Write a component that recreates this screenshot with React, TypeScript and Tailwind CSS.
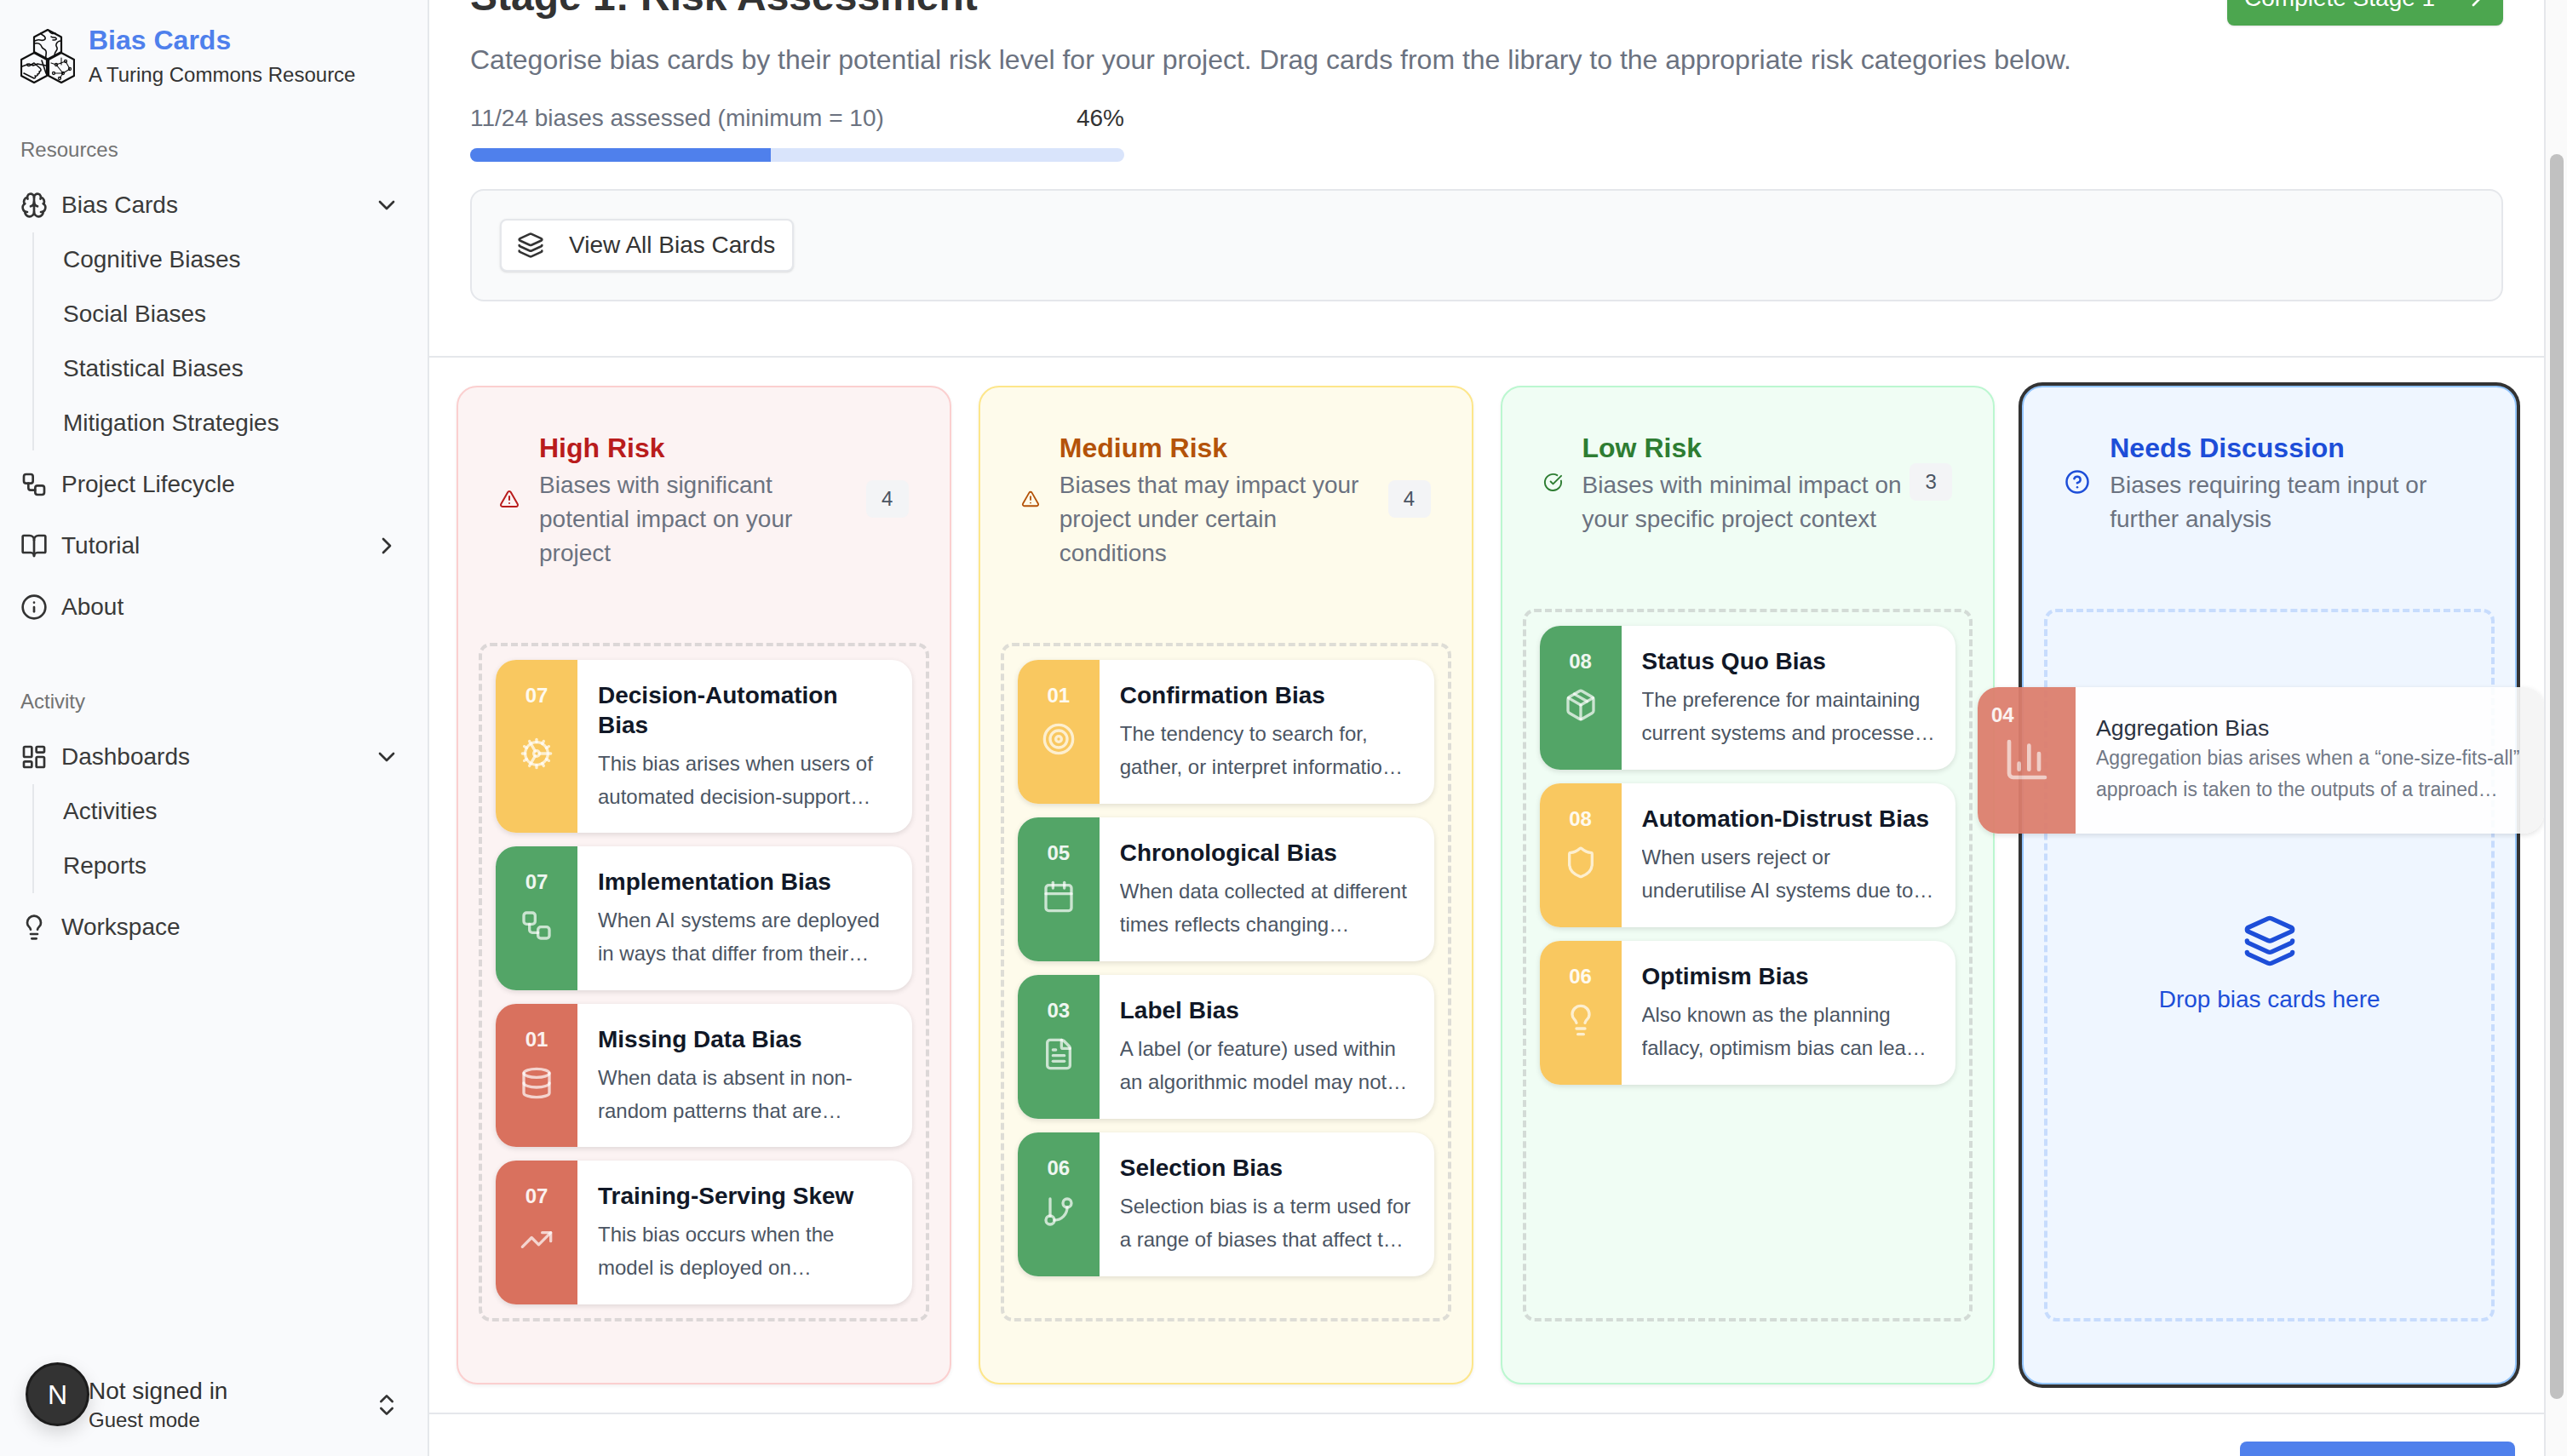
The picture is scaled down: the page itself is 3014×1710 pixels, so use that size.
import {
  BookOpen, Brain, Calendar, ChartColumn, ChevronDown, ChevronRight, ChevronsUpDown, CircleCheckBig,
  CircleHelp, Cog, Database, FileText, GitBranch, Info, Layers, LayoutDashboard, Lightbulb, Package,
  Shield, Target, TrendingUp, TriangleAlert, Workflow,
} from 'lucide-react'
import type { LucideIcon } from 'lucide-react'

interface Bias {
  num: string
  title: string
  text: string
  strip: string
  icon: LucideIcon
}

const yellow = 'bg-[#f9c860]'
const green = 'bg-[#53a567]'
const red = 'bg-[#d9715e]'

const highRisk: Bias[] = [
  { num: '07', title: 'Decision-Automation Bias', text: 'This bias arises when users of automated decision-support systems favour suggestions made by those systems over other evidence.', strip: yellow, icon: Cog },
  { num: '07', title: 'Implementation Bias', text: 'When AI systems are deployed in ways that differ from their intended purpose and original design context.', strip: green, icon: Workflow },
  { num: '01', title: 'Missing Data Bias', text: 'When data is absent in non-random patterns that are systematically related to the outcomes under study.', strip: red, icon: Database },
  { num: '07', title: 'Training-Serving Skew', text: 'This bias occurs when the model is deployed on production data that differs from its training data.', strip: red, icon: TrendingUp },
]

const mediumRisk: Bias[] = [
  { num: '01', title: 'Confirmation Bias', text: 'The tendency to search for, gather, or interpret information that supports existing beliefs and expectations.', strip: yellow, icon: Target },
  { num: '05', title: 'Chronological Bias', text: 'When data collected at different times reflects changing circumstances that the model does not account for.', strip: green, icon: Calendar },
  { num: '03', title: 'Label Bias', text: 'A label (or feature) used within an algorithmic model may not accurately measure the intended concept.', strip: green, icon: FileText },
  { num: '06', title: 'Selection Bias', text: 'Selection bias is a term used for a range of biases that affect the selection of data for a study.', strip: green, icon: GitBranch },
]

const lowRisk: Bias[] = [
  { num: '08', title: 'Status Quo Bias', text: 'The preference for maintaining current systems and processes over alternatives that may be better.', strip: green, icon: Package },
  { num: '08', title: 'Automation-Distrust Bias', text: 'When users reject or underutilise AI systems due to distrust of automated recommendations.', strip: yellow, icon: Shield },
  { num: '06', title: 'Optimism Bias', text: 'Also known as the planning fallacy, optimism bias can lead project teams to underestimate risks.', strip: yellow, icon: Lightbulb },
]

function Logo() {
  return (
    <svg viewBox="0 0 64 64" className="w-[64px] h-[64px] shrink-0" fill="none" stroke="#111" strokeWidth="2.2" strokeLinejoin="round" strokeLinecap="round">
      <path d="M32 1 48 9.5V27L32 35.5 16 27V9.5Z" />
      <path d="M16 28 31 36V55L16 63 1 55V36Z" />
      <path d="M48 28 63 36V55L48 63 33 55V36Z" />
      <g strokeWidth="1.6">
        <path d="M24 5c1 3 4 2 5 5s-3 4-6 3-5 1-7 1M17 17c4-1 7 1 8 4s4 2 5 5-1 6 0 9" />
        <path d="M34 3c1 2 4 3 7 2M36 9c2 2 5 0 6 2s-2 2-4 2M48 14c-3 0-5 1-6 4s2 3 1 6-3 3-3 7" />
        <path d="M2 44l8-3 5 2 5-2 10 2M4 52l6 3 6 3c2 0 2-2 1-3 2 1 4-1 3-2 2 0 3-2 2-3 2 0 3-2 1-4l-7-6-5 3c-2 1-4 0-3-2" />
        <path d="M25 37l5 15" />
      </g>
      <g strokeWidth="1.1">
        <circle cx="42" cy="42" r="1.6" />
        <circle cx="53" cy="38" r="1.6" />
        <circle cx="58" cy="47" r="1.6" />
        <circle cx="39" cy="52" r="1.6" />
        <circle cx="50" cy="52" r="1.6" />
        <circle cx="46" cy="58" r="1.6" />
        <path d="M42 42l11-4M53 38l5 9M42 42l8 10M39 52h11M50 52l-4 6M50 52l8-5M48 34v8M36 40l6 2" />
      </g>
    </svg>
  )
}

function NavRow({ icon: Icon, label, chevron }: { icon: LucideIcon; label: string; chevron?: 'down' | 'right' }) {
  return (
    <div className="flex items-center h-[64px] pl-[24px] pr-[32px] text-[28px] text-[#3a3a3a]">
      <Icon className="w-[32px] h-[32px] shrink-0 text-[#333]" strokeWidth={2} />
      <span className="ml-[16px] flex-1">{label}</span>
      {chevron === 'down' && <ChevronDown className="w-[32px] h-[32px] text-[#333]" />}
      {chevron === 'right' && <ChevronRight className="w-[32px] h-[32px] text-[#333]" />}
    </div>
  )
}

function SubNav({ items }: { items: string[] }) {
  return (
    <div className="ml-[38px] border-l-2 border-[#e5e7eb] pl-[34px] text-[28px] text-[#3a3a3a]">
      {items.map(item => (
        <div key={item} className="h-[64px] flex items-center">{item}</div>
      ))}
    </div>
  )
}

function Sidebar() {
  return (
    <aside className="w-[504px] shrink-0 h-full flex flex-col bg-[#f9fafc] border-r-2 border-[#e5e7eb]">
      <div className="flex items-center pl-[24px] pt-[27px] gap-[16px]">
        <Logo />
        <div>
          <div className="text-[32px] leading-[40px] font-bold text-[#4f80ec]">Bias Cards</div>
          <div className="text-[24px] leading-[32px] mt-[5px] text-[#333]">A Turing Commons Resource</div>
        </div>
      </div>

      <div className="mt-[56px] pl-[24px] h-[32px] leading-[32px] text-[24px] text-[#737373]">Resources</div>
      <div className="mt-[17px]">
        <NavRow icon={Brain} label="Bias Cards" chevron="down" />
        <SubNav items={['Cognitive Biases', 'Social Biases', 'Statistical Biases', 'Mitigation Strategies']} />
        <div className="mt-[8px] flex flex-col gap-[8px]">
          <NavRow icon={Workflow} label="Project Lifecycle" />
          <NavRow icon={BookOpen} label="Tutorial" chevron="right" />
          <NavRow icon={Info} label="About" />
        </div>
      </div>

      <div className="mt-[63px] pl-[24px] h-[32px] leading-[32px] text-[24px] text-[#737373]">Activity</div>
      <div className="mt-[17px]">
        <NavRow icon={LayoutDashboard} label="Dashboards" chevron="down" />
        <SubNav items={['Activities', 'Reports']} />
        <div className="mt-[8px]">
          <NavRow icon={Lightbulb} label="Workspace" />
        </div>
      </div>

      <div className="mt-auto flex items-center pl-[104px] pr-[32px] pb-[26px]">
        <div className="flex-1">
          <div className="text-[28px] leading-[36px] text-[#333]">Not signed in</div>
          <div className="text-[24px] leading-[32px] text-[#333]">Guest mode</div>
        </div>
        <ChevronsUpDown className="w-[32px] h-[32px] text-[#333]" />
      </div>
    </aside>
  )
}

function BiasCard({ bias }: { bias: Bias }) {
  const Icon = bias.icon
  return (
    <div className="flex rounded-[24px] bg-white overflow-hidden shadow-[0_2px_6px_rgba(0,0,0,0.12)]">
      <div className={`w-[96px] shrink-0 flex flex-col items-center pt-[24px] pb-[43px] ${bias.strip}`}>
        <div className="text-[24px] leading-[36px] font-bold text-white/90">{bias.num}</div>
        <div className="flex-1 flex items-center justify-center">
          <Icon className="w-[40px] h-[40px] text-white/70" />
        </div>
      </div>
      <div className="flex-1 min-w-0 px-[24px] pt-[24px] pb-[24px]">
        <div className="text-[28px] leading-[35px] font-bold text-[#111827]">{bias.title}</div>
        <p className="mt-[8px] text-[24px] leading-[39px] text-[#4b5563] line-clamp-2">{bias.text}</p>
      </div>
    </div>
  )
}

interface ColumnProps {
  title: string
  text: string
  count?: number
  box: string
  titleColor: string
  icon: React.ReactNode
  dashed: string
  children: React.ReactNode
}

function Column({ title, text, count, box, titleColor, icon, dashed, children }: ColumnProps) {
  return (
    <div className={`h-[1173px] flex flex-col rounded-[24px] border-2 px-[24px] pb-[72px] shadow-[0_2px_4px_rgba(0,0,0,0.06)] ${box}`}>
      <div className="flex items-center pt-[47px] pl-[24px] pr-[24px]">
        {icon}
        <div className="flex-1 min-w-0 ml-[23px]">
          <div className={`text-[32px] leading-[48px] font-bold ${titleColor}`}>{title}</div>
          <div className="text-[28px] leading-[40px] text-[#6b7280]">{text}</div>
        </div>
        {count !== undefined && (
          <div className="ml-[8px] w-[50px] h-[44px] shrink-0 rounded-[8px] bg-[#f3f4f6] flex items-center justify-center text-[24px] text-[#4b5563]">
            {count}
          </div>
        )}
      </div>
      <div className={`mt-[85px] flex-1 min-h-0 rounded-[14px] border-4 border-dashed p-[16px] flex flex-col gap-[16px] ${dashed}`}>
        {children}
      </div>
    </div>
  )
}

function DraggedCard() {
  return (
    <div className="absolute left-[1818px] top-[387px] z-10 w-[665px] h-[172px] flex rounded-[24px] bg-white/95 overflow-hidden opacity-95 shadow-[0_2px_6px_rgba(0,0,0,0.12)]">
      <div className="w-[115px] shrink-0 flex flex-col pt-[15px] bg-[#d9715e]/90">
        <div className="pl-[16px] text-[24px] leading-[36px] font-bold text-white/90">04</div>
        <div className="flex justify-center mt-[6px]">
          <ChartColumn className="w-[56px] h-[56px] text-white/60" />
        </div>
      </div>
      <div className="flex-1 min-w-0 pl-[24px] pr-[16px] pt-[31px]">
        <div className="text-[26.7px] leading-[34px] text-[#1f2937]">Aggregation Bias</div>
        <p className="text-[23px] leading-[37px] text-[#6b7280] line-clamp-2">
          Aggregation bias arises when a “one-size-fits-all” approach is taken to the outputs of a trained model across distinct groups.
        </p>
      </div>
      <div className="absolute inset-y-0 right-0 w-[29px] bg-[#e5e5e5]/40" />
    </div>
  )
}

export default function App() {
  return (
    <div className="relative flex w-screen h-screen overflow-hidden bg-white font-['Liberation_Sans',Arial,sans-serif]">
      <Sidebar />

      <main className="flex-1 min-w-0 h-full overflow-hidden bg-white">
        {/* page is scrolled: the heading sits partly above the fold */}
        <section className="-mt-[42px] px-[48px] pb-[64px] border-b-2 border-[#e5e7eb]">
          <div className="flex items-start justify-between">
            <h1 className="mt-[6px] text-[48px] leading-[64px] font-bold text-[#333]">Stage 1: Risk Assessment</h1>
            <div className="w-[324px] h-[72px] rounded-[8px] bg-[#4ca64f] text-white text-[28px] flex items-center justify-between pt-[8px] pl-[20px] pr-[15px] shadow-sm">
              Complete Stage 1
              <ChevronRight className="w-[32px] h-[32px]" />
            </div>
          </div>
          <p className="mt-[16px] text-[32px] leading-[48px] text-[#6b7280]">
            Categorise bias cards by their potential risk level for your project. Drag cards from the library to the appropriate risk categories below.
          </p>
          <div className="mt-[25px] w-[768px]">
            <div className="flex justify-between text-[28px] leading-[40px]">
              <span className="text-[#6b7280]">11/24 biases assessed (minimum = 10)</span>
              <span className="text-[#333]">46%</span>
            </div>
            <div className="mt-[15px] h-[16px] rounded-full overflow-hidden bg-[#d9e4fb]">
              <div className="h-full w-[46%] bg-[#4f80ec]" />
            </div>
          </div>
          <div className="mt-[32px] rounded-[16px] border-2 border-[#e5e7eb] bg-[#f9fafb] p-[33px]">
            <div className="inline-flex items-center h-[62px] pl-[18px] pr-[20px] rounded-[8px] border-2 border-[#e5e7eb] bg-white shadow-sm text-[28px] text-[#333]">
              <Layers className="w-[32px] h-[32px]" />
              <span className="ml-[29px]">View All Bias Cards</span>
            </div>
          </div>
        </section>

        <section className="relative px-[32px] pt-[33px] pb-[33px] border-b-2 border-[#e5e7eb]">
          <div className="grid grid-cols-4 gap-[32px]">
            <Column
              title="High Risk"
              text="Biases with significant potential impact on your project"
              count={4}
              box="bg-[#fcf3f3] border-[#fbcfcf]"
              titleColor="text-[#b91c1c]"
              dashed="border-[#dcd7d7]"
              icon={<TriangleAlert className="w-[24px] h-[24px] shrink-0 text-[#b91c1c]" />}
            >
              {highRisk.map(b => <BiasCard key={b.title} bias={b} />)}
            </Column>
            <Column
              title="Medium Risk"
              text="Biases that may impact your project under certain conditions"
              count={4}
              box="bg-[#fefbeb] border-[#fde68a]"
              titleColor="text-[#b45309]"
              dashed="border-[#deddd6]"
              icon={<TriangleAlert className="w-[22px] h-[22px] shrink-0 text-[#b45309]" />}
            >
              {mediumRisk.map(b => <BiasCard key={b.title} bias={b} />)}
            </Column>
            <Column
              title="Low Risk"
              text="Biases with minimal impact on your specific project context"
              count={3}
              box="bg-[#f0fdf4] border-[#bbf7d0]"
              titleColor="text-[#2e7d32]"
              dashed="border-[#d3dbd6]"
              icon={<CircleCheckBig className="w-[23px] h-[23px] shrink-0 text-[#2e7d32]" />}
            >
              {lowRisk.map(b => <BiasCard key={b.title} bias={b} />)}
            </Column>
            <Column
              title="Needs Discussion"
              text="Biases requiring team input or further analysis"
              box="bg-[#eff6ff] border-[#93c5fd] ring-4 ring-[#333]"
              titleColor="text-[#1d4ed8]"
              dashed="border-[#c7dcfd] items-center justify-center !gap-0"
              icon={<CircleHelp className="w-[30px] h-[30px] shrink-0 text-[#1d4ed8]" />}
            >
              <Layers className="w-[64px] h-[64px] text-[#1d4ed8]" />
              <div className="mt-[17px] text-[28px] leading-[40px] text-[#1d4ed8]">Drop bias cards here</div>
            </Column>
          </div>
          <DraggedCard />
        </section>

        <div className="pt-[32px] pr-[34px] flex justify-end">
          <div className="w-[323px] h-[72px] rounded-[8px] bg-[#4f80ec]" />
        </div>
      </main>

      {/* scrollbar gutter */}
      <div className="w-[27px] shrink-0 h-full border-l-2 border-[#e5e7eb] bg-[#fafafa] pl-[5px]">
        <div className="mt-[181px] w-[16px] h-[1462px] rounded-full bg-[#c1c1c1]" />
      </div>

      {/* Next.js dev indicator floating over the sidebar footer */}
      <div className="absolute left-[30px] bottom-[35px] w-[75px] h-[75px] rounded-full bg-[#333] border-[3px] border-[#1c1c1c] flex items-center justify-center text-white text-[32px] shadow-[0_8px_20px_rgba(0,0,0,0.15)]">
        N
      </div>
    </div>
  )
}
